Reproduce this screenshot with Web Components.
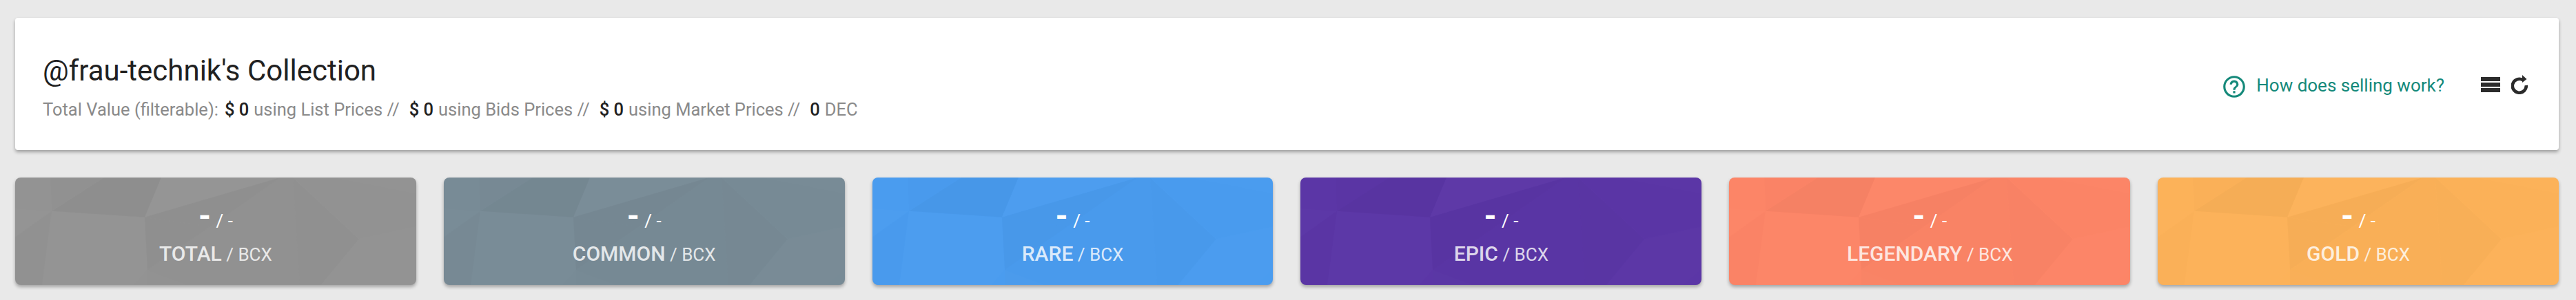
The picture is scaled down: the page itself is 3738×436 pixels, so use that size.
<!DOCTYPE html>
<html lang="en"><head><meta charset="utf-8"><title>Collection</title>
<style>
html,body{margin:0;padding:0;background:#e9e9e9;font-family:Roboto,sans-serif}
body{height:436px;overflow:hidden}
</style></head><body>
<collection-page>
  <collection-header slot="header" owner="@frau-technik's Collection">
    <value-item slot="values" amount="$ 0" label="using List Prices //"></value-item>
    <value-item slot="values" amount="$ 0" label="using Bids Prices //"></value-item>
    <value-item slot="values" amount="$ 0" label="using Market Prices //"></value-item>
    <value-item slot="values" amount="0" label="DEC"></value-item>
  </collection-header>
  <rarity-card slot="cards" name="TOTAL" color="#939393"></rarity-card>
  <rarity-card slot="cards" name="COMMON" color="#788b96"></rarity-card>
  <rarity-card slot="cards" name="RARE" color="#4a9cef"></rarity-card>
  <rarity-card slot="cards" name="EPIC" color="#5b36a6"></rarity-card>
  <rarity-card slot="cards" name="LEGENDARY" color="#fc8567"></rarity-card>
  <rarity-card slot="cards" name="GOLD" color="#fcb259"></rarity-card>
</collection-page>
<script>
class CollectionPage extends HTMLElement{
  constructor(){super();this.attachShadow({mode:'open'}).innerHTML=`<style>
  :host{display:flex;flex-direction:column;gap:40px;padding:26px 25px 0 22px}
  .cards{display:flex;gap:40px}
  ::slotted(rarity-card){flex:1 1 0}
  </style><slot name="header"></slot><div class="cards"><slot name="cards"></slot></div>`}
}
class ValueItem extends HTMLElement{
  constructor(){super();this.attachShadow({mode:'open'}).innerHTML=`<style>
  :host{display:inline-flex;gap:7px;white-space:nowrap}
  b{font-weight:500;color:#212121}
  </style><b></b><span></span>`}
  connectedCallback(){this.shadowRoot.querySelector('b').textContent=this.getAttribute('amount');this.shadowRoot.querySelector('span').textContent=this.getAttribute('label')}
}
class HelpLink extends HTMLElement{
  constructor(){super();this.attachShadow({mode:'open'}).innerHTML=`<style>
  :host{display:inline-flex;align-items:center;gap:16px;color:#15897a;font-size:26px;white-space:nowrap}
  svg{display:block;width:38px;height:38px;margin:6px -3px 0}
  span{margin-bottom:-1px}
  </style><svg viewBox="0 0 24 24" fill="currentColor"><path d="M11 18h2v-2h-2v2zm1-16C6.48 2 2 6.48 2 12s4.48 10 10 10 10-4.48 10-10S17.52 2 12 2zm0 18c-4.41 0-8-3.59-8-8s3.59-8 8-8 8 3.59 8 8-3.59 8-8 8zm0-14c-2.21 0-4 1.79-4 4h2c0-1.1.9-2 2-2s2 .9 2 2c0 2-3 1.75-3 5h2c0-2.25 3-2.5 3-5 0-2.21-1.79-4-4-4z"/></svg><span>How does selling work?</span>`}
}
class CollectionHeader extends HTMLElement{
  constructor(){super();this.attachShadow({mode:'open'}).innerHTML=`<style>
  :host{display:flex;align-items:center;justify-content:space-between;height:192px;box-sizing:border-box;padding:0 45px 0 40px;background:#fff;border-radius:4px;box-shadow:0 3px 5px rgba(0,0,0,.32)}
  .left{padding-top:8px}
  h1{margin:0;font-weight:400;font-size:42px;line-height:50px;color:#212121;white-space:nowrap}
  .sub{display:flex;gap:14px;margin-top:15px;font-size:25.5px;line-height:32px;color:#8a8a8a;white-space:nowrap}
  .sub span{margin-right:-5px}
  .right{display:flex;align-items:center;padding-top:2px}
  .icons{display:flex;align-items:center;gap:16px;margin-left:53px;color:#2b2b2b}
  .icons svg{display:block}
  </style><div class="left"><h1></h1><div class="sub"><span>Total Value (filterable):</span><slot name="values"></slot></div></div>
  <div class="right"><help-link></help-link><div class="icons">
    <svg width="28" height="22" viewBox="0 0 28 22" fill="currentColor"><rect width="28" height="6"/><rect y="8" width="28" height="6"/><rect y="16" width="28" height="6"/></svg>
    <svg width="24" height="28" viewBox="0 0 24 28"><path d="M17 7.2A10 10 0 1 0 21.8 15" fill="none" stroke="currentColor" stroke-width="4.6"/><path d="M16 0l6.5 6-6.5 5z" fill="currentColor"/></svg>
  </div></div>`}
  connectedCallback(){this.shadowRoot.querySelector('h1').textContent=this.getAttribute('owner')}
}
class LowPoly extends HTMLElement{
  constructor(){super();
  const P=[
  ['51,0 129,0 53,49','#000',.008],['129,0 212,0 188,58 53,49','#000',.028],['212,0 385,0 188,58','#fff',.02],
  ['385,0 283,72 188,58','#000',.022],['188,58 283,72 192,135','#000',.022],['385,0 403,0 413,157 192,157 192,135 283,72','#000',.01],
  ['403,0 499,90 444,157 413,157','#000',.014],['403,0 464,0 582,23 582,72 499,90','#000',.005],
  ['0,45 53,49 0,87','#fff',.01],['0,87 53,49 39,157 0,157','#000',.008],['53,49 188,58 192,135 173,157 39,157','#fff',.012],
  ['192,135 192,157 250,157','#fff',.01],['499,90 582,72 582,135 556,157 444,157','#fff',.008]];
  this.attachShadow({mode:'open'}).innerHTML=`<style>:host{display:block;position:absolute;inset:0;border-radius:8px;overflow:hidden}svg{display:block;width:100%;height:100%}</style>
  <svg viewBox="0 0 582 157" preserveAspectRatio="none">${P.map(p=>`<polygon points="${p[0]}" fill="${p[1]}" fill-opacity="${p[2]}"/>`).join('')}</svg>`}
}
class RarityCard extends HTMLElement{
  constructor(){super();this.attachShadow({mode:'open'}).innerHTML=`<style>
  :host{display:block;position:relative;height:156px;border-radius:8px;color:#fff;text-align:center;box-shadow:0 3px 5px rgba(0,0,0,.3);background:var(--c)}
  .wrap{position:relative;z-index:1;padding-top:26px;white-space:nowrap}
  .count{font-size:26px;line-height:60px;height:60px}
  .count b{font-size:46px;font-weight:700;margin-right:1px}
  .name{font-size:26px;line-height:40px;opacity:.8;margin-top:5px}
  .name b{font-size:30px;font-weight:500}
  </style><low-poly></low-poly><div class="wrap"><div class="count"><b>-</b> / -</div><div class="name"><b></b> / BCX</div></div>`}
  connectedCallback(){
    this.style.setProperty('--c',this.getAttribute('color'));
    this.shadowRoot.querySelector('.name b').textContent=this.getAttribute('name');
  }
}
customElements.define('low-poly',LowPoly);
customElements.define('help-link',HelpLink);
customElements.define('value-item',ValueItem);
customElements.define('collection-header',CollectionHeader);
customElements.define('rarity-card',RarityCard);
customElements.define('collection-page',CollectionPage);
</script>
</body></html>
